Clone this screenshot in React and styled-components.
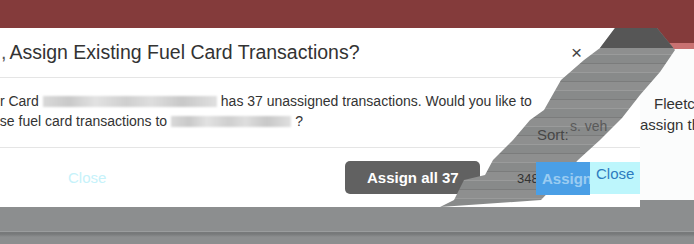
import React from "react";
import styled, { createGlobalStyle } from "styled-components";

const Global = createGlobalStyle`
  html, body {
    margin: 0;
    padding: 0;
    background: #8c8e8f;
  }
  body {
    font-family: "Liberation Sans", Arial, sans-serif;
    color: #333;
  }
`;

const App = () => {
  return (
    <Page>
      <Global />
      <TopBar />
      <Stage>
        <Modal>
          <Header>
            <Title>
              <Tick>,</Tick>Assign Existing Fuel Card Transactions?
            </Title>
            <CloseX>×</CloseX>
          </Header>
          <Body>
            <Line $shift={-46}>
              Fleetcor Card<Blur $w={174} />has 37 unassigned transactions. Would you like to
            </Line>
            <Line $shift={-64}>
              assign these fuel card transactions to<Blur $w={120} />?
            </Line>
          </Body>
          <Footer>
            <FadedLink>Close</FadedLink>
            <DarkButton>Assign all 37</DarkButton>
          </Footer>
        </Modal>
        <GhostPanel>
          <GhostCap />
          <GhostStripe />
          <GhostText>
            <GhostLine $indent={14}>Fleetcor Card</GhostLine>
            <GhostLine>assign these</GhostLine>
          </GhostText>
        </GhostPanel>

        <Tear />
        <SortLabel>Sort:</SortLabel>
        <SortValue>s. veh</SortValue>
        <Count>348</Count>
        <BlueGhost>Assign all 37</BlueGhost>
        <CyanGhost>Close</CyanGhost>
      </Stage>
      <Backdrop>
        <Rule />
      </Backdrop>
    </Page>
  );
};

export default App;

const Page = styled.div`
  width: 694px;
  height: 244px;
  overflow: hidden;
  position: relative;
  background: #8c8e8f;
`;

const TopBar = styled.div`
  height: 28px;
  background: #843b3b;
`;

const Stage = styled.div`
  position: relative;
  display: flex;
  height: 179px;
`;

const Modal = styled.div`
  width: 640px;
  flex: none;
  background: #fff;
  border-top-right-radius: 6px;
  display: flex;
  flex-direction: column;
`;

const Header = styled.div`
  height: 50px;
  box-sizing: border-box;
  border-bottom: 1px solid #e5e5e5;
  display: flex;
  align-items: center;
  padding-right: 58px;
`;

const Title = styled.h4`
  margin: 0 0 0 1px;
  flex: 1;
  font-size: 19.5px;
  font-weight: 400;
  color: #333;
  white-space: nowrap;
`;

const Tick = styled.span`
  color: #555;
  margin-right: 3px;
`;

const CloseX = styled.span`
  font-size: 19px;
  line-height: 1;
  color: #444;
`;

const Body = styled.div`
  height: 70px;
  box-sizing: border-box;
  padding-top: 13px;
  border-bottom: 1px solid #e5e5e5;
  overflow: hidden;
`;

const Line = styled.div`
  margin-left: ${(p) => p.$shift}px;
  font-size: 14px;
  line-height: 20px;
  white-space: nowrap;
  color: #333;
`;

const Blur = styled.span`
  display: inline-block;
  width: ${(p) => p.$w}px;
  height: 11px;
  margin: 0 4px;
  vertical-align: -1px;
  background: linear-gradient(
    90deg,
    #d9d9d9 0%,
    #c9c9c9 15%,
    #e2e2e2 30%,
    #cfcfcf 48%,
    #dedede 62%,
    #c8c8c8 80%,
    #e0e0e0 100%
  );
  filter: blur(1.2px);
`;

const Footer = styled.div`
  flex: 1;
  display: flex;
  align-items: center;
  padding-left: 68px;
  gap: 239px;
`;

const FadedLink = styled.span`
  font-size: 15px;
  color: #c6f2fa;
`;

const DarkButton = styled.button`
  height: 33px;
  width: 135px;
  border: none;
  border-radius: 5px;
  background: #616161;
  color: #fff;
  font-family: "Liberation Sans", Arial, sans-serif;
  font-size: 15px;
  font-weight: 700;
  cursor: pointer;
`;

const GhostPanel = styled.div`
  flex: 1;
  height: 172px;
  display: flex;
  flex-direction: column;
  background: #fbfcfc;
`;

const GhostCap = styled.div`
  height: 15px;
  background: #843b3b;
`;

const GhostStripe = styled.div`
  height: 6px;
  background: #c97272;
`;

const GhostText = styled.div`
  padding-top: 44px;
  font-size: 15px;
  line-height: 21px;
  color: #333;
  white-space: nowrap;
`;

const GhostLine = styled.div`
  padding-left: ${(p) => p.$indent || 0}px;
`;

const Tear = styled.div`
  position: absolute;
  inset: 0;
  background:
    linear-gradient(180deg, #565656 0 20px, transparent 20px),
    repeating-linear-gradient(
      180deg,
      #8e8f8f 0 8px,
      #9a9b9b 8px 9px,
      #888a8a 9px 17px,
      #7b7c7c 17px 18px
    );
  clip-path: polygon(
    615px 0,
    657px 0,
    675px 22px,
    660px 44px,
    640px 67px,
    622px 90px,
    600px 112px,
    578px 132px,
    560px 152px,
    541px 172px,
    440px 179px,
    454px 172px,
    464px 152px,
    485px 147px,
    493px 132px,
    513px 112px,
    530px 92px,
    544px 82px,
    561px 52px,
    584px 32px,
    600px 20px
  );
`;

const SortLabel = styled.span`
  position: absolute;
  left: 537px;
  top: 98px;
  font-size: 15px;
  color: #474747;
`;

const SortValue = styled.span`
  position: absolute;
  left: 570px;
  top: 90px;
  font-size: 14px;
  color: #5a5a5a;
`;

const Count = styled.span`
  position: absolute;
  left: 517px;
  top: 143px;
  font-size: 13px;
  color: #333;
`;

const BlueGhost = styled.div`
  position: absolute;
  left: 536px;
  top: 134px;
  width: 54px;
  height: 33px;
  overflow: hidden;
  background: #4a9fe6;
  color: rgba(225, 245, 252, 0.55);
  font-size: 15px;
  font-weight: 700;
  line-height: 33px;
  white-space: nowrap;
  text-indent: 6px;
`;

const CyanGhost = styled.div`
  position: absolute;
  left: 590px;
  top: 134px;
  width: 50px;
  height: 32px;
  box-sizing: border-box;
  padding: 3px 0 0 6px;
  background: #bdf6fc;
  color: #2d7cc0;
  font-size: 15px;
`;

const Backdrop = styled.div`
  height: 37px;
  background: linear-gradient(180deg, #77797a 0 3px, #8c8e8f 6px);
  position: relative;
`;

const Rule = styled.div`
  margin-top: 24px;
  height: 1px;
  background: #9b9d9e;
`;
